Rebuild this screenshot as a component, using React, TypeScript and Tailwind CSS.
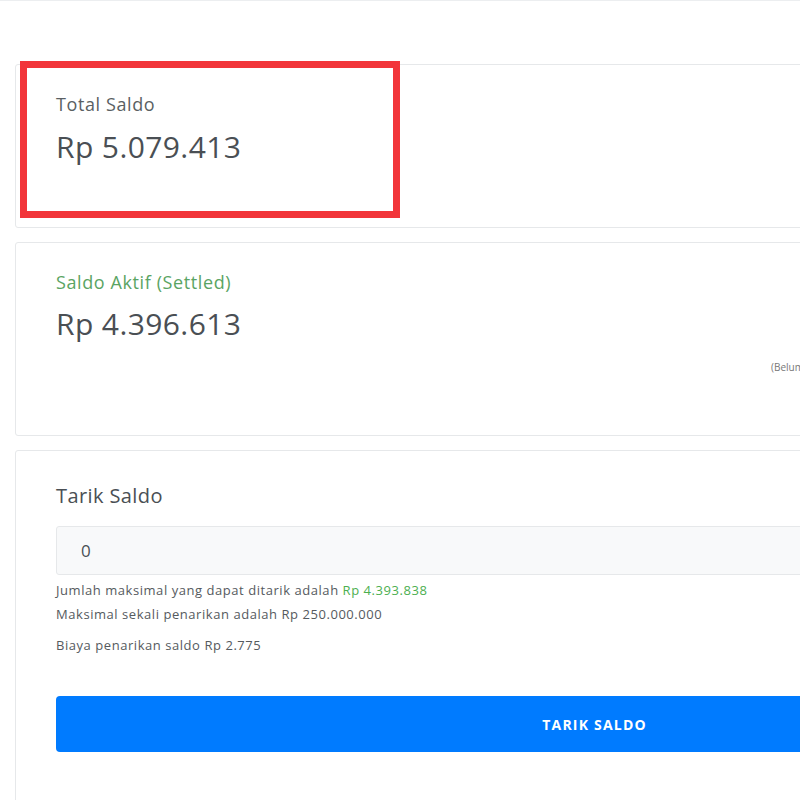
import React from 'react';

const Card: React.FC<{ className?: string; children: React.ReactNode }> = ({ className = '', children }) => (
  <div className={`bg-white border border-[#e6e8ea] rounded-[3px] ${className}`}>{children}</div>
);

export default function App() {
  return (
    <div className="w-[800px] h-[800px] overflow-hidden bg-white" style={{ fontFamily: '"Open Sans", Lato, sans-serif' }}>
      <div className="h-[2px] border-t border-[#eceef0]" />
      <div className="w-[1174px] pl-[15px] pt-[62px] flex flex-col gap-[14px]">
        <div className="relative">
          <Card className="h-[164px] pl-[40px] pt-[27px]">
            <div className="text-[18px] leading-[24px] tracking-[0.6px] text-[#5a5f63]">Total Saldo</div>
            <div className="mt-[11px] text-[30px] leading-[40px] tracking-[0.4px] text-[#4a4f54]">Rp 5.079.413</div>
          </Card>
          <div className="absolute left-[5px] top-[-3px] w-[380px] h-[157px] border-[7px] border-[#f2353a]" />
        </div>

        <Card className="h-[194px] pl-[40px] pt-[27px] relative">
          <div className="text-[18px] leading-[24px] tracking-[0.6px] text-[#5aa463]">Saldo Aktif (Settled)</div>
          <div className="mt-[10px] text-[30px] leading-[40px] tracking-[0.4px] text-[#4a4f54]">Rp 4.396.613</div>
          <div className="absolute left-[755px] top-[117px] text-[10px] text-[#777]">(Belum termasuk biaya)</div>
        </Card>

        <Card className="h-[360px] pl-[40px] pr-[40px] pt-[30px]">
          <div className="text-[20px] leading-[30px] tracking-[0.4px] text-[#4a4f54]">Tarik Saldo</div>
          <div className="mt-[15px] h-[49px] bg-[#f8f9fa] border border-[#e6e8ea] rounded-[3px] flex items-center pl-[24px] text-[17px] text-[#4a4f54]">
            0
          </div>
          <div className="mt-[5px] text-[13px] leading-[20px] tracking-[0.55px] text-[#555a5e]">
            Jumlah maksimal yang dapat ditarik adalah <span className="text-[#4caf50]">Rp 4.393.838</span>
          </div>
          <div className="mt-[4px] text-[13px] leading-[20px] tracking-[0.55px] text-[#555a5e]">Maksimal sekali penarikan adalah Rp 250.000.000</div>
          <div className="mt-[11px] text-[13px] leading-[20px] tracking-[0.55px] text-[#555a5e]">Biaya penarikan saldo Rp 2.775</div>
          <button className="mt-[41px] w-full h-[56px] bg-[#007bff] rounded-[4px] text-white text-[14px] font-bold tracking-[1.2px]">
            TARIK SALDO
          </button>
        </Card>
      </div>
    </div>
  );
}
